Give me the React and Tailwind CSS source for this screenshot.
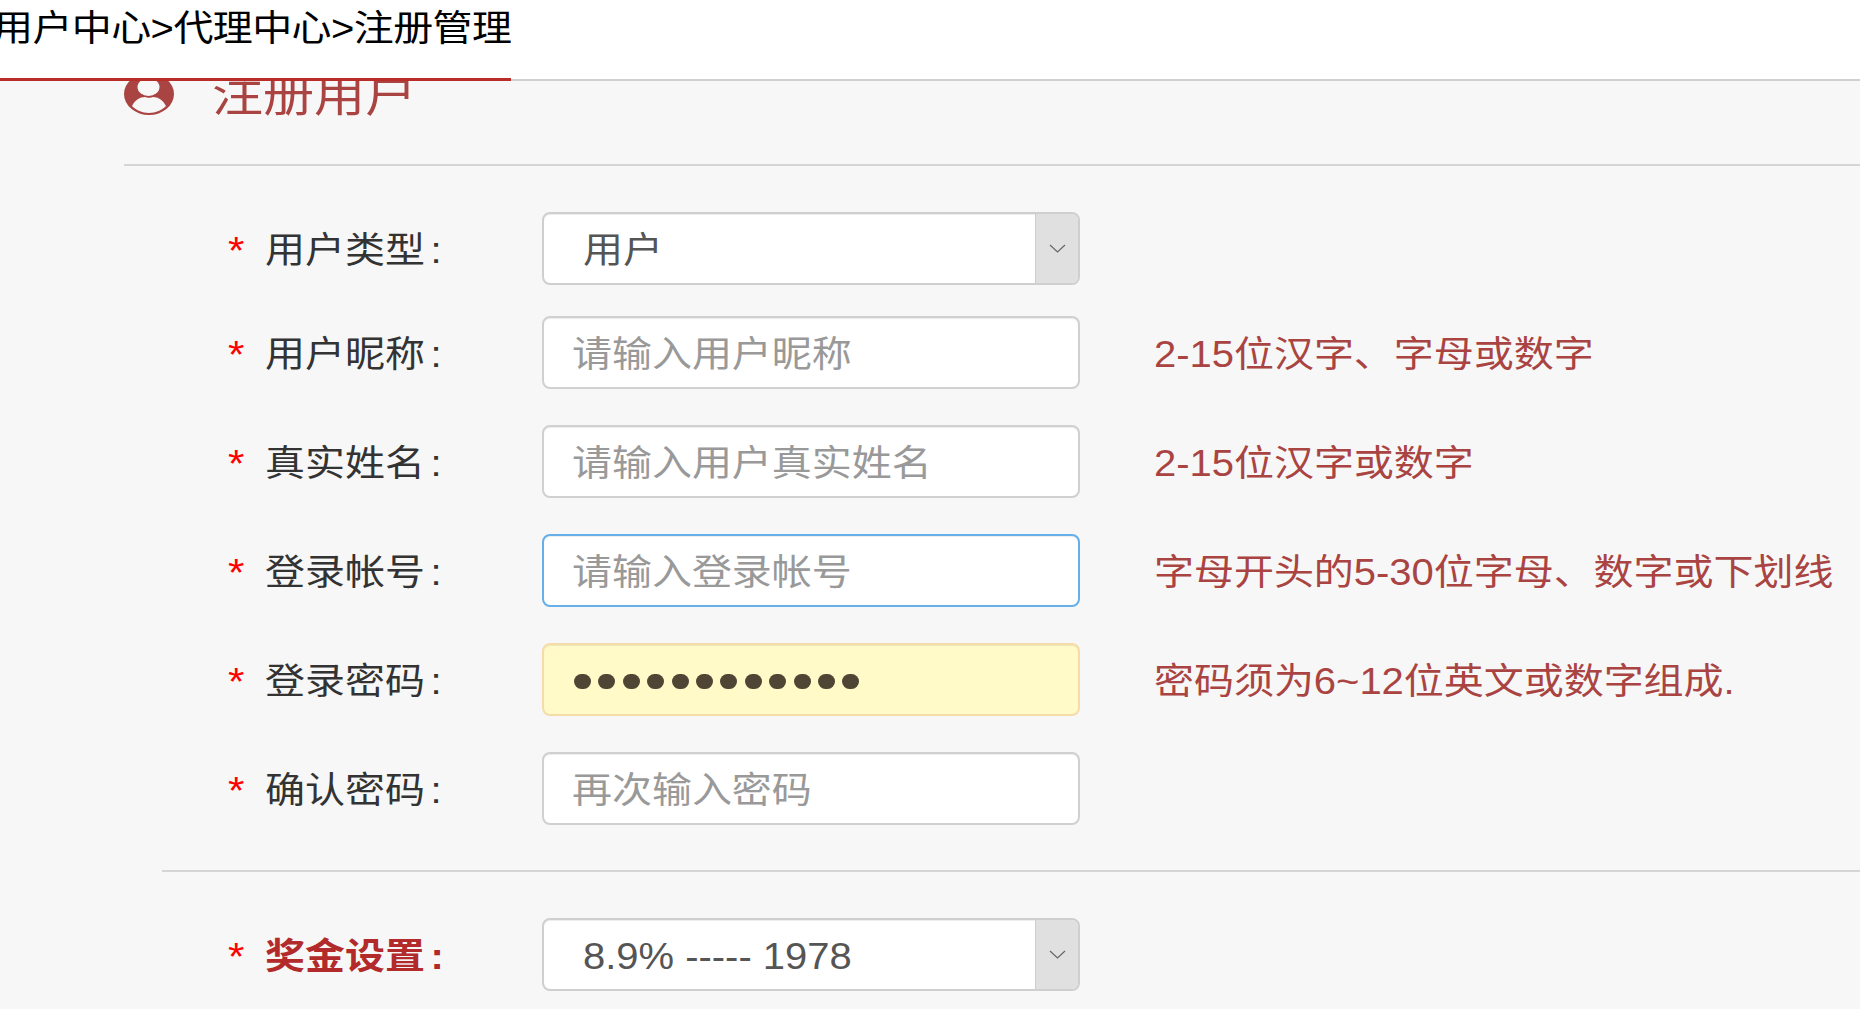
const Wide = ({ className = "", children }) => (
  <span className={`inline-block origin-left translate-y-[2px] scale-x-[1.11] whitespace-nowrap ${className}`}>{children}</span>
);

function Chevron() {
  return (
    <svg width="17" height="9" viewBox="0 0 17 9" fill="none" stroke="#666" strokeWidth="1.2">
      <path d="M1 1l7.500 7 7.500-7" />
    </svg>
  );
}

function UserIcon() {
  return (
    <svg width="50" height="42" viewBox="0 0 50 42" preserveAspectRatio="none">
      <ellipse cx="25" cy="21" rx="25" ry="21" fill="#a94442" />
      <ellipse cx="24.500" cy="14" rx="11" ry="9" fill="#f7f7f7" />
      <path d="M8 33c3-6 8-9 13-9 2 1 6 1 8 0 5 0 10 3 13 9-4 4-10 7-17 7s-13-3-17-7z" fill="#f7f7f7" />
    </svg>
  );
}

function Row({ label, strong = false, hint, className = "", children }) {
  return (
    <div className={`flex h-[73px] items-center ${className}`}>
      <div className="w-[39px] pl-[2px] text-[38px] leading-none text-[#ff0000]">
        <Wide>*</Wide>
      </div>
      <div className={`w-[277px] ${strong ? "font-bold text-[#b22a2a]" : "text-[#333]"}`}>
        <Wide>{label}<span className="ml-[5px]">:</span></Wide>
      </div>
      {children}
      {hint && <div className="ml-[74px] text-[#a94442]"><Wide>{hint}</Wide></div>}
    </div>
  );
}

function Field({ className = "border-[#d0d0d0] bg-white", children }) {
  return (
    <div className={`flex h-[73px] w-[538px] items-center rounded-lg border-2 pl-[28px] shadow-[inset_0_1px_1px_rgba(0,0,0,0.075)] ${className}`}>
      {children}
    </div>
  );
}

function SelectBox({ value }) {
  return (
    <div className="flex h-[73px] w-[538px] overflow-hidden rounded-lg border-2 border-[#cfcfcf] bg-white shadow-[inset_0_1px_1px_rgba(0,0,0,0.075)]">
      <div className="flex flex-1 items-center pl-[39px] text-[#555]"><Wide>{value}</Wide></div>
      <div className="flex w-[43px] items-center justify-center border-l border-[#ccc] bg-[#e0e0e0]">
        <Chevron />
      </div>
    </div>
  );
}

const dots = [1, 2, 3, 4, 5, 6, 7, 8, 9, 10, 11, 12];

export default function App() {
  return (
    <div className="h-[1009px] overflow-hidden bg-[#f7f7f7] font-['Liberation_Sans','Noto_Sans_CJK_SC',sans-serif] text-[36px] leading-[44px]">
      <div className="relative z-10 h-[81px] border-b-2 border-[#d0d0d0] bg-white">
        <div className="h-[81px] w-[511px] overflow-hidden border-b-[3px] border-[#b92c28] text-black">
          <Wide className="-ml-[7px] mt-[5px] tracking-[-0.5px]">用户中心&gt;代理中心&gt;注册管理</Wide>
        </div>
      </div>

      <div className="pl-[124px]">
        <div className="h-[93px] border-b-2 border-[#d5d5d5]">
          <div className="-mt-[8px] flex h-[42px] items-center text-[46px] text-[#a94442]">
            <UserIcon />
            <Wide className="ml-[38px] -mt-[3px]">注册用户</Wide>
          </div>
        </div>

        <div className="pl-[102px] pt-[46px]">
          <Row label="用户类型">
            <SelectBox value="用户" />
          </Row>
          <Row label="用户昵称" hint="2-15位汉字、字母或数字" className="mt-[31px]">
            <Field><span className="text-[#999]"><Wide>请输入用户昵称</Wide></span></Field>
          </Row>
          <Row label="真实姓名" hint="2-15位汉字或数字" className="mt-[36px]">
            <Field><span className="text-[#999]"><Wide>请输入用户真实姓名</Wide></span></Field>
          </Row>
          <Row label="登录帐号" hint="字母开头的5-30位字母、数字或下划线" className="mt-[36px]">
            <Field className="border-[#66afe9] bg-white shadow-[inset_0_1px_1px_rgba(0,0,0,0.075),0_0_10px_rgba(102,175,233,0.6)]">
              <span className="text-[#999]"><Wide>请输入登录帐号</Wide></span>
            </Field>
          </Row>
          <Row label="登录密码" hint="密码须为6~12位英文或数字组成." className="mt-[36px]">
            <Field className="border-[#f5dca8] bg-[#fffac8]">
              <div className="ml-[2px] mt-[3px] flex gap-[7.400px]">
                {dots.map((d) => (
                  <span key={d} className="h-[15px] w-[17px] rounded-full bg-[#4f4535]" />
                ))}
              </div>
            </Field>
          </Row>
          <Row label="确认密码" className="mt-[36px]">
            <Field><span className="text-[#999]"><Wide>再次输入密码</Wide></span></Field>
          </Row>
        </div>

        <div className="ml-[38px] mt-[45px] border-t-2 border-[#d5d5d5]" />

        <div className="pl-[102px] pt-[46px]">
          <Row label="奖金设置" strong>
            <SelectBox value="8.9% ----- 1978" />
          </Row>
        </div>
      </div>
    </div>
  );
}
